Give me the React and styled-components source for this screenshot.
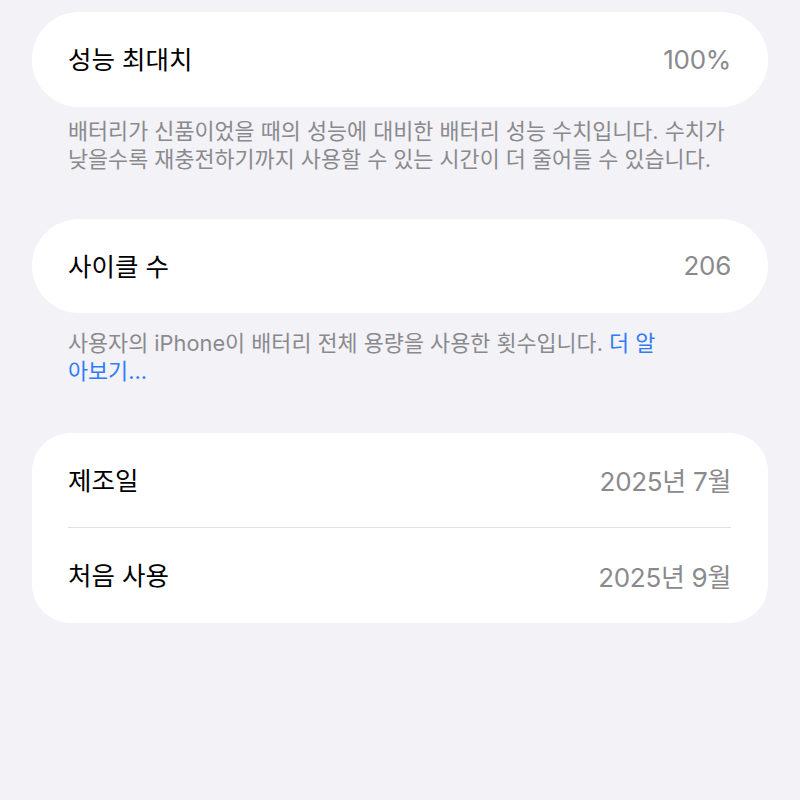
import React from "react";
import styled, { createGlobalStyle } from "styled-components";

const GlobalStyle = createGlobalStyle`
  html, body {
    margin: 0;
    padding: 0;
    background-color: #f2f2f7;
  }

  body {
    font-family: "Inter", "Noto Sans CJK KR", sans-serif;
    -webkit-font-smoothing: antialiased;
  }
`;

const StyledPage = styled.div`
  min-height: 800px;
  padding: 12px 32px 0;
  box-sizing: border-box;
  background-color: #f2f2f7;
`;

const StyledCard = styled.div`
  margin-top: ${({ gap }) => gap || 0}px;

  background-color: #ffffff;
  border-radius: ${({ radius }) => radius}px;
  overflow: hidden;
`;

const StyledRow = styled.div`
  height: ${({ height }) => height}px;
  padding: 0 37px 0 36px;

  display: flex;
  align-items: center;
  justify-content: space-between;
`;

const StyledLabel = styled.span`
  margin-bottom: 4px;

  color: #000000;
  font-size: 25.5px;
  font-weight: 400;
`;

const StyledValue = styled.span`
  margin-bottom: 1px;

  color: #8a8a8e;
  font-size: 26px;
  font-weight: 400;
  letter-spacing: -0.3px;
`;

const StyledDivider = styled.div`
  height: 1px;
  margin: 0 37px 0 36px;

  background-color: #e0e0e4;
`;

const StyledFooter = styled.p`
  margin: 0;
  padding: ${({ top }) => top}px 36px 0;

  color: #8a8a8e;
  font-size: 21.8px;
  line-height: 28px;
  white-space: nowrap;
`;

const StyledLink = styled.span`
  color: #2f7cf6;
`;

const App = () => {
  return (
    <>
      <GlobalStyle />
      <StyledPage>
        <StyledCard radius={47}>
          <StyledRow height={95}>
            <StyledLabel>성능 최대치</StyledLabel>
            <StyledValue>100%</StyledValue>
          </StyledRow>
        </StyledCard>

        <StyledFooter top={10}>
          배터리가 신품이었을 때의 성능에 대비한 배터리 성능 수치입니다. 수치가
          <br />
          낮을수록 재충전하기까지 사용할 수 있는 시간이 더 줄어들 수 있습니다.
        </StyledFooter>

        <StyledCard radius={47} gap={46}>
          <StyledRow height={94}>
            <StyledLabel>사이클 수</StyledLabel>
            <StyledValue>206</StyledValue>
          </StyledRow>
        </StyledCard>

        <StyledFooter top={16}>
          사용자의 iPhone이 배터리 전체 용량을 사용한 횟수입니다.{" "}
          <StyledLink>더 알</StyledLink>
          <br />
          <StyledLink>아보기...</StyledLink>
        </StyledFooter>

        <StyledCard radius={38} gap={48}>
          <StyledRow height={94}>
            <StyledLabel>제조일</StyledLabel>
            <StyledValue>2025년 7월</StyledValue>
          </StyledRow>
          <StyledDivider />
          <StyledRow height={95}>
            <StyledLabel>처음 사용</StyledLabel>
            <StyledValue>2025년 9월</StyledValue>
          </StyledRow>
        </StyledCard>
      </StyledPage>
    </>
  );
};

export default App;
